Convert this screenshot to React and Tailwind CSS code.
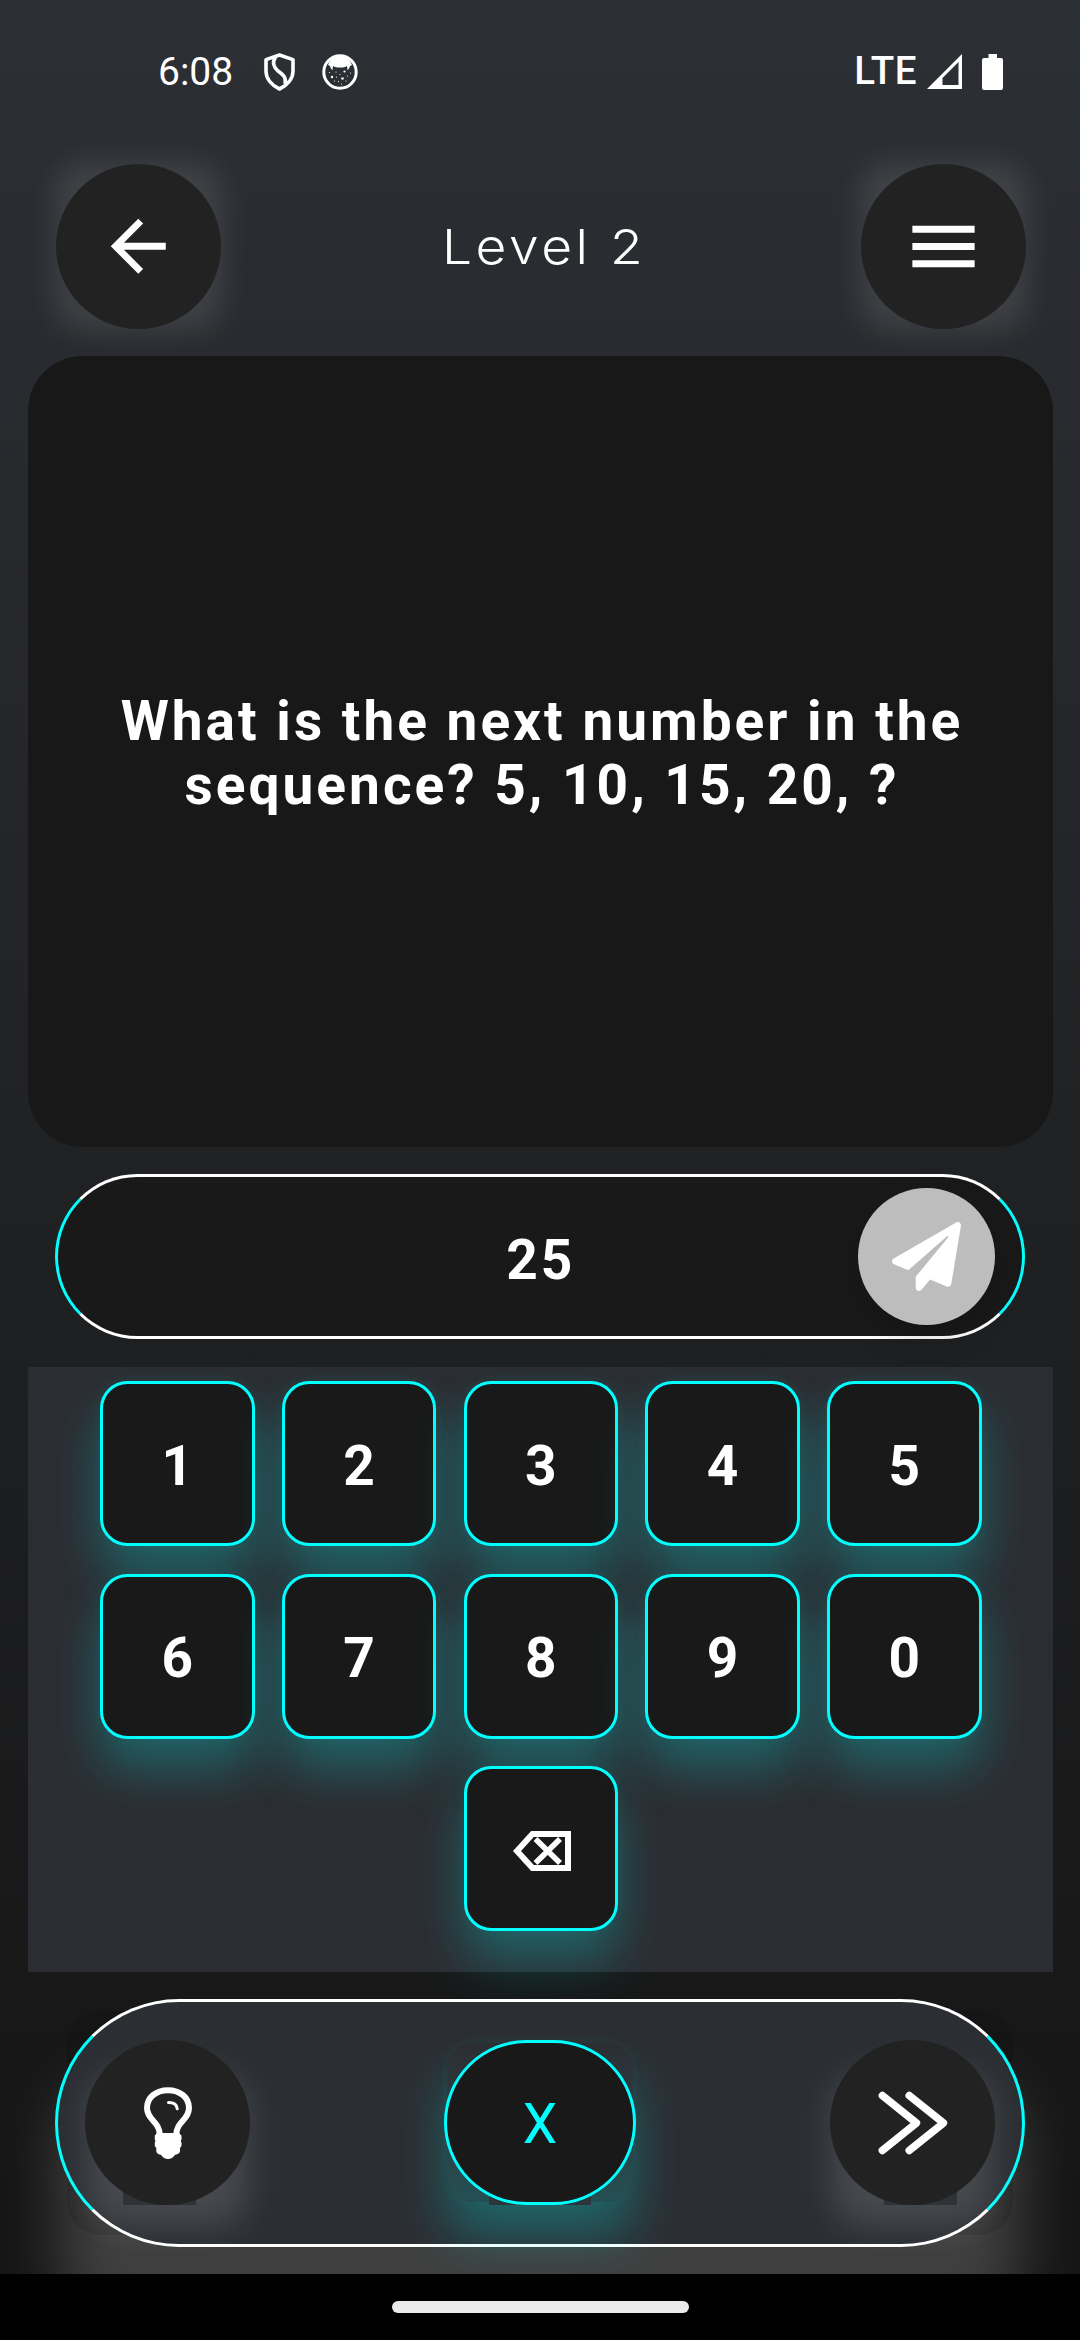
import React from "react";
import { MdArrowBack, MdMenu } from "react-icons/md";
import { FaPaperPlane } from "react-icons/fa";

function ShieldIcon() {
  return (
    <svg width="31" height="38" viewBox="0 0 31 38" fill="none" stroke="#fff" strokeWidth="3.6" strokeLinejoin="round">
      <path d="M15.5 2 L29 6.6 V18 C29 26 23 32.500 15.500 36 C8 32.500 2 26 2 18 V6.600 Z" />
      <path d="M11.500 4.500 C8 9 9.500 14 14 18 C19.500 22 22.500 24.500 21 31" />
    </svg>
  );
}

function CatIcon() {
  return (
    <svg width="36" height="36" viewBox="0 0 36 36">
      <circle cx="18" cy="18" r="16.200" fill="none" stroke="#fff" strokeWidth="3" />
      <path d="M6 11 C9 3 14 1.500 18 1.500 S27 3 30 11 L28 12 C27.500 14 26.500 15.500 25.500 16 L25 12 C22 14 14 14 11 12 L10.500 16 C9.500 15.500 8.500 14 8 12 Z" fill="#fff" />
      <g fill="#fff">
        <circle cx="10" cy="23" r="1.200" />
        <circle cx="20.500" cy="24.500" r="1.200" />
        <circle cx="22.500" cy="17.500" r="1.100" />
        <circle cx="14" cy="18" r=".6" />
        <circle cx="18" cy="20.500" r=".6" />
        <circle cx="7.500" cy="18.500" r=".6" />
        <circle cx="12.500" cy="27" r=".6" />
        <circle cx="16.500" cy="27.500" r=".6" />
        <circle cx="25.500" cy="22" r=".6" />
        <circle cx="28.500" cy="19" r=".6" />
        <circle cx="24" cy="27" r=".6" />
        <circle cx="19.500" cy="30" r=".6" />
        <circle cx="14.500" cy="23" r=".6" />
      </g>
    </svg>
  );
}

function SignalIcon() {
  return (
    <svg width="35" height="35" viewBox="0 0 35 35" fill="#fff">
      <path fillRule="evenodd" d="M0 35 L35 0 V35 Z M15.500 24 V31 H31.500 V8 Z" />
    </svg>
  );
}

function BatteryIcon() {
  return (
    <svg width="21" height="36" viewBox="0 0 21 36" fill="#fff">
      <path d="M6.500 0 H15 V4 H19 a2 2 0 0 1 2 2 V34 a2 2 0 0 1 -2 2 H2 a2 2 0 0 1 -2 -2 V6 a2 2 0 0 1 2 -2 H6.500 Z" />
    </svg>
  );
}

function BulbIcon() {
  return (
    <svg width="48" height="72" viewBox="0 0 48 72" fill="none">
      <path
        d="M15.800 48 C15.500 34 3 33 3 21 C3 10.500 12 3.200 24 3.200 S45 10.500 45 21 C45 33 32.500 34 32.200 48"
        stroke="#fff"
        strokeWidth="6"
      />
      <path d="M24.500 15.500 C30 15.500 33 18 33.200 21.800" stroke="#fff" strokeWidth="3" strokeLinecap="round" />
      <path
        d="M13 46 H35 L37.500 48.500 V52.500 L36.700 54 L37.500 55.500 V59 L36 61 V64 C36 66.500 33 67.500 31 67.800 C29 71 27 72 24 72 S19 71 17 67.800 C15 67.500 12.300 66.500 12.300 64 V61 L10.800 59 V55.500 L11.500 54 L10.800 52.500 V48.500 Z"
        fill="#fff"
      />
    </svg>
  );
}

function SkipIcon() {
  return (
    <svg width="70" height="64" viewBox="0 0 70 64" fill="none" stroke="#fff" strokeWidth="7.400" strokeLinecap="round" strokeLinejoin="round">
      <path d="M4.300 4.500 L38.500 32 L4.300 59.500" />
      <path d="M31.200 4.500 L65.500 32 L31.200 59.500" />
    </svg>
  );
}

function BackspaceIcon() {
  return (
    <svg width="58" height="40" viewBox="0 0 58 40" fill="none" stroke="#fff" className="ml-[3px]">
      <path d="M4 20 L19.500 3 H55 V37 H19.500 Z" strokeWidth="6" />
      <path d="M22.500 8 L47 32 M47 8 L22.500 32" strokeWidth="5.600" />
    </svg>
  );
}

function RoundButton({ label, glow, notch, children }) {
  return (
    <button aria-label={label} className="relative isolate size-[165px] shrink-0">
      <span className={"absolute -z-20 " + glow} />
      {notch && <span className={"absolute bottom-0 -z-10 h-[30px] w-[73px] bg-[#2f3338] " + notch} />}
      <span className="flex size-full items-center justify-center rounded-full bg-[#222222] text-white">{children}</span>
    </button>
  );
}

const evenGlow = "-inset-[2px] rounded-[30px] bg-white/10 blur-[14px]";
const lowGlow = "inset-x-[2px] top-[34px] -bottom-[22px] rounded-[34px] bg-white/13 blur-[16px]";

function Key({ label, children }) {
  return (
    <button
      aria-label={label}
      className="flex h-[165px] w-[154.500px] items-center justify-center rounded-[27.500px] border-3 border-[#00ffff] bg-[#191919] pt-[4px] text-[55px] leading-[64px] font-bold text-white shadow-[0_0_14px_rgba(0,255,255,0.06),0_30px_50px_rgba(0,255,255,0.25)]"
    >
      {children}
    </button>
  );
}

const keyRows = [
  ["1", "2", "3", "4", "5"],
  ["6", "7", "8", "9", "0"],
];

export default function App() {
  return (
    <div className="flex h-[2340px] w-[1080px] flex-col overflow-hidden bg-black font-['Roboto',sans-serif] text-white">
      <main className="flex h-[2274px] flex-col overflow-hidden bg-linear-to-b from-[#2c2f34] to-[#151515]">
        <div className="flex h-[142px] shrink-0 items-center justify-between pt-[1px] pr-[77px] pl-[158px]">
          <div className="flex items-center">
            <span className="w-[106px] pt-[2px] text-[39px] leading-none">6:08</span>
            <ShieldIcon />
            <span className="ml-[27px]"><CatIcon /></span>
          </div>
          <div className="flex items-center">
            <span className="mr-[10px] text-[38.500px] leading-none font-medium tracking-[0.500px]">LTE</span>
            <SignalIcon />
            <span className="ml-[20px]"><BatteryIcon /></span>
          </div>
        </div>

        <header className="mt-[22px] flex h-[165px] shrink-0 items-center justify-between pr-[54px] pl-[56px]">
          <RoundButton label="Back" glow={evenGlow}><MdArrowBack size={82.5} /></RoundButton>
          <h1 className="scale-x-110 pt-[2px] pl-[5px] font-['Inter',sans-serif] text-[48.500px] font-light tracking-[3.200px]">Level 2</h1>
          <RoundButton label="Menu" glow={evenGlow}><MdMenu size={83} /></RoundButton>
        </header>

        <section className="relative mx-[27.500px] mt-[27px] flex h-[791px] shrink-0 items-center justify-center rounded-[55px] bg-[#181818] px-[55px] text-center">
          <p className="pt-[3px] pl-[4px] text-[55px] leading-[64.400px] font-bold tracking-[3px]">
            What is the next number in the<br />sequence? 5, 10, 15, 20, ?
          </p>
        </section>

        <section className="relative mx-[55px] mt-[27px] flex h-[165px] shrink-0 items-center rounded-full border-3 border-x-[#00ffff] border-y-white bg-[#191919]">
          <span className="flex-1 pt-[6px] pl-[166px] text-center text-[55px] leading-[64px] font-bold tracking-[2.950px]">25</span>
          <button aria-label="Send" className="mr-[27px] flex size-[137.500px] items-center justify-center rounded-full bg-[#bdbdbd] shadow-[0_12px_30px_rgba(0,0,0,0.18)]">
            <FaPaperPlane size={69} />
          </button>
        </section>

        <section className="mx-[27.500px] mt-[28px] flex h-[605px] shrink-0 flex-col items-center gap-[27.500px] bg-[#2b2d32] pt-[14px] pl-[1.500px]">
          {keyRows.map((row) => (
            <div key={row[0]} className="flex gap-[27.250px]">
              {row.map((n) => <Key key={n} label={n}>{n}</Key>)}
            </div>
          ))}
          <Key label="Delete"><BackspaceIcon /></Key>
        </section>

        <nav className="relative isolate mx-[55px] mt-[27px] h-[248px] shrink-0">
          <span className="absolute inset-x-[4px] top-[84px] -bottom-[90px] -z-20 rounded-[60px] bg-white/18 blur-[30px]" />
          <span className="absolute inset-[12px] -z-10 rounded-[33px] bg-black/12" />
          <div className="flex h-full items-center justify-between rounded-full border-3 border-x-[#00ffff] border-y-white bg-[#2b2e33] px-[27px] pb-[1px]">
            <RoundButton label="Hint" glow={lowGlow} notch="left-[38px]"><BulbIcon /></RoundButton>
            <button aria-label="Clear" className="relative isolate h-[165px] w-[192px] text-[55px] text-[#00ffff]">
              <span className="absolute inset-[3px] -z-20 rounded-[27px] bg-linear-to-b from-[#2b2e33] to-[#245054] shadow-[0_0_14px_rgba(0,255,255,0.06),0_34px_50px_rgba(0,255,255,0.26)]" />
              <span className="absolute bottom-0 left-[45px] -z-10 h-[30px] w-[102px] bg-[#2b353a]" />
              <span className="flex size-full items-center justify-center rounded-full border-3 border-[#00ffff] bg-[#191919] pt-[4px]">X</span>
            </button>
            <RoundButton label="Skip" glow={lowGlow} notch="left-[54px]"><SkipIcon /></RoundButton>
          </div>
        </nav>
      </main>
      <footer className="relative flex h-[66px] shrink-0 justify-center bg-black pt-[27px]">
        <span className="h-[12px] w-[297px] rounded-full bg-[#ebebeb]" />
      </footer>
    </div>
  );
}
